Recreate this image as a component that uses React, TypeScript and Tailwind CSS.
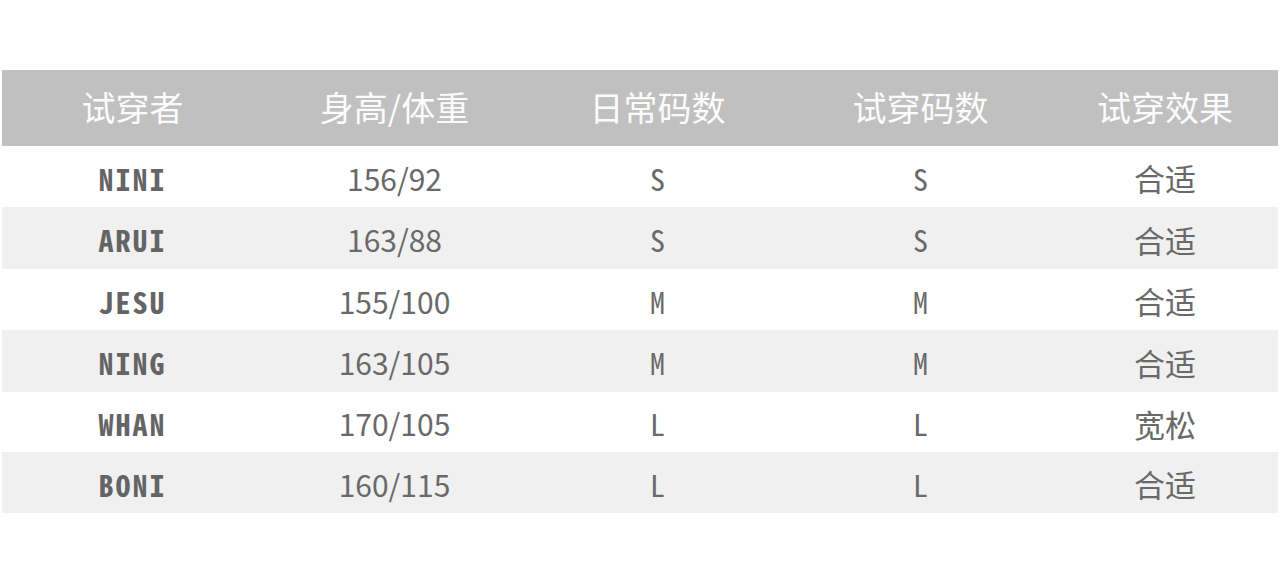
import React from "react";

const rows = [
  { name: "NINI", hw: "156/92", daily: "S", trial: "S", fit: "合适", h: "h-[61px]" },
  { name: "ARUI", hw: "163/88", daily: "S", trial: "S", fit: "合适", h: "h-[62px]" },
  { name: "JESU", hw: "155/100", daily: "M", trial: "M", fit: "合适", h: "h-[61px]" },
  { name: "NING", hw: "163/105", daily: "M", trial: "M", fit: "合适", h: "h-[62px]" },
  { name: "WHAN", hw: "170/105", daily: "L", trial: "L", fit: "宽松", h: "h-[60px]" },
  { name: "BONI", hw: "160/115", daily: "L", trial: "L", fit: "合适", h: "h-[61px]" },
];

const headers = ["试穿者", "身高/体重", "日常码数", "试穿码数", "试穿效果"];

export default function App() {
  return (
    <div className="w-[1280px] h-[584px] bg-white pt-[70px] overflow-hidden">
      <div className="ml-[2px] w-[1276px]">
        <div className="grid grid-cols-[261px_263px_263px_263px_226px] h-[76px] bg-[#c0c0c0] items-center text-[#fbfbfb] text-[34px] font-['Noto_Sans_CJK_SC',sans-serif]">
          {headers.map((h) => (
            <div key={h} className="text-center leading-none pb-[2px]">
              {h}
            </div>
          ))}
        </div>
        {rows.map((r, i) => (
          <div
            key={r.name}
            className={
              "grid grid-cols-[261px_263px_263px_263px_226px] items-center text-[#696969] " +
              r.h +
              " " +
              (i % 2 === 1 ? "bg-[#f0f0f0]" : "bg-white")
            }
          >
            <div className="text-center font-bold text-[30px] leading-none tracking-[2px] font-['Noto_Sans_Mono_CJK_SC','Liberation_Mono',monospace] text-[#646464] pt-[2px]">
              {r.name}
            </div>
            <div className="text-center text-[30px] leading-none pt-[2px] font-['Noto_Sans_CJK_SC',sans-serif]">
              {r.hw}
            </div>
            <div className="text-center text-[30px] leading-none pt-[2px] font-['Noto_Sans_Mono_CJK_SC','Liberation_Mono',monospace]">
              {r.daily}
            </div>
            <div className="text-center text-[30px] leading-none pt-[2px] font-['Noto_Sans_Mono_CJK_SC','Liberation_Mono',monospace]">
              {r.trial}
            </div>
            <div className="text-center text-[31px] leading-none pt-[2px] font-['Noto_Sans_CJK_SC',sans-serif]">
              {r.fit}
            </div>
          </div>
        ))}
      </div>
    </div>
  );
}
